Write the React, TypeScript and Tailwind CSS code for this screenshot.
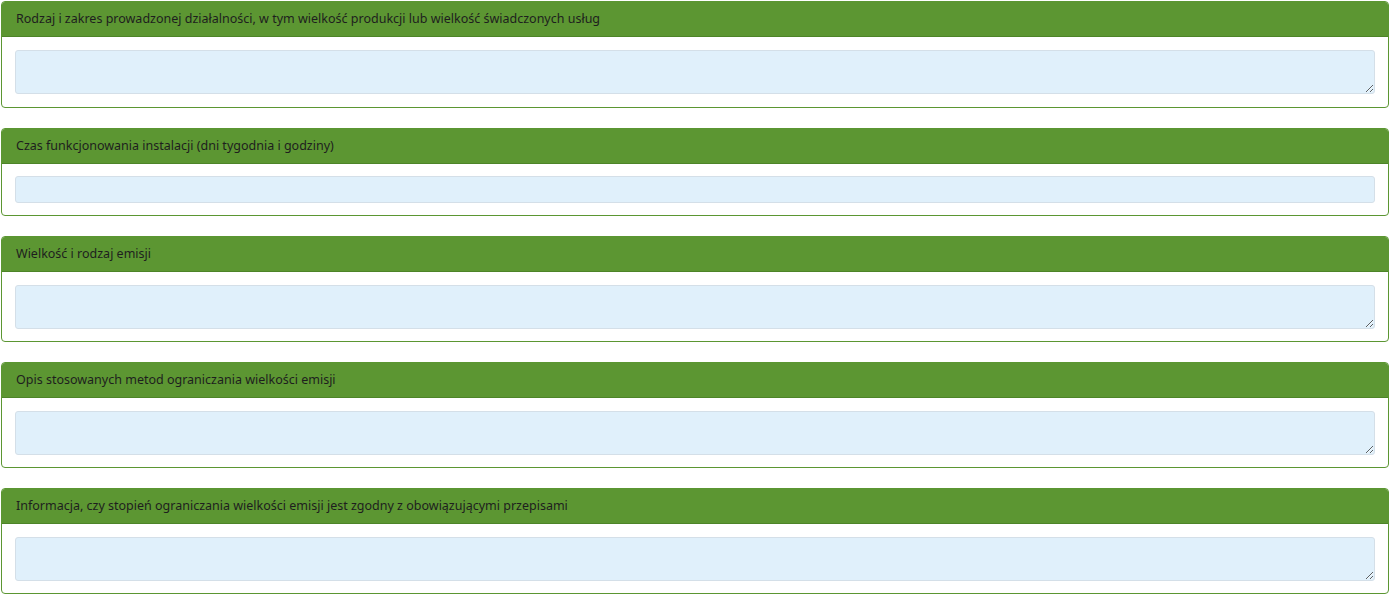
import React from "react";

const sections = [
  { label: "Rodzaj i zakres prowadzonej działalności, w tym wielkość produkcji lub wielkość świadczonych usług", multi: true },
  { label: "Czas funkcjonowania instalacji (dni tygodnia i godziny)", multi: false },
  { label: "Wielkość i rodzaj emisji", multi: true },
  { label: "Opis stosowanych metod ograniczania wielkości emisji", multi: true },
  { label: "Informacja, czy stopień ograniczania wielkości emisji jest zgodny z obowiązującymi przepisami", multi: true },
];

function Panel({ label, multi, first }: { label: string; multi: boolean; first: boolean }) {
  return (
    <div className="mb-[20px] overflow-hidden rounded-[4px] border border-[#5b9632] bg-white">
      <div className="flex h-[35px] items-center border-b border-[#4d8428] bg-[#5c9632] px-[14px] text-[12.5px] text-[#1e1e1e]">
        {label}
      </div>
      {multi ? (
        <div className={first ? "px-[13px] pt-[13px] pb-[13px]" : "px-[13px] pt-[13px] pb-[12px]"}>
          <textarea className="block h-[44px] w-full rounded-[3px] border border-[#d4dfe8] bg-[#e0f0fb] px-2 py-1 text-[13px] outline-none" />
        </div>
      ) : (
        <div className="px-[13px] py-[12px]">
          <input className="block h-[27px] w-full rounded-[3px] border border-[#d4dfe8] bg-[#e0f0fb] px-2 text-[13px] outline-none" />
        </div>
      )}
    </div>
  );
}

export default function App() {
  return (
    <div className="mx-px mt-px bg-white" style={{ fontFamily: '"Noto Sans", "Open Sans", sans-serif' }}>
      {sections.map((s, i) => (
        <Panel key={s.label} label={s.label} multi={s.multi} first={i === 0} />
      ))}
    </div>
  );
}
